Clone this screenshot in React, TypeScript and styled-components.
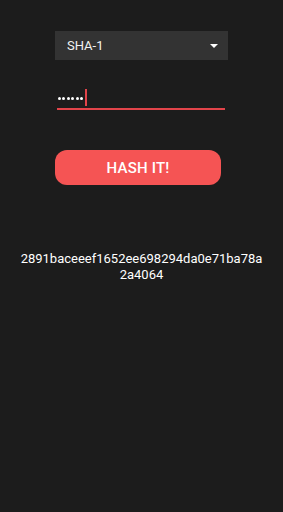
import React from "react";
import styled, {createGlobalStyle} from "styled-components";

const GlobalStyle = createGlobalStyle`
  html, body {
    margin: 0;
    padding: 0;
    background: #1c1c1c;
    font-family: Roboto, "Liberation Sans", sans-serif;
  }
`;

const Page = styled.div`
  width: 283px;
  min-height: 512px;
  background: #1c1c1c;
  display: flex;
  flex-direction: column;
  align-items: center;
  padding-top: 31px;
  box-sizing: border-box;
`;

const Select = styled.div`
  width: 173px;
  height: 29px;
  background: #333333;
  color: #f2f2f2;
  font-size: 13px;
  display: flex;
  align-items: center;
  justify-content: space-between;
  padding: 0 10px 0 12px;
  box-sizing: border-box;
`;

const Arrow = styled.span`
  width: 0;
  height: 0;
  border-left: 4px solid transparent;
  border-right: 4px solid transparent;
  border-top: 4px solid #ffffff;
`;

const Field = styled.div`
  width: 167px;
  height: 21px;
  margin-top: 27px;
  margin-right: 1px;
  border-bottom: 2px solid #e2444a;
  display: flex;
  align-items: center;
  padding-left: 1px;
  box-sizing: content-box;
`;

const Dots = styled.span`
  display: flex;
  gap: 1.4px;
  margin-top: 2px;
`;

const Dot = styled.span`
  width: 3px;
  height: 3px;
  border-radius: 50%;
  background: #ffffff;
`;

const Caret = styled.span`
  width: 2px;
  height: 17px;
  margin-left: 2px;
  background: #e2444a;
`;

const Button = styled.button`
  width: 166px;
  height: 35px;
  margin-top: 40px;
  margin-right: 7px;
  border: none;
  border-radius: 12px;
  background: #f55454;
  color: #ffffff;
  font-family: Roboto, "Liberation Sans", sans-serif;
  font-size: 15px;
  font-weight: 500;
  letter-spacing: 0.2px;
  cursor: pointer;
`;

const Result = styled.div`
  margin-top: 66px;
  width: 246px;
  color: #ffffff;
  font-size: 13px;
  line-height: 16px;
  text-align: center;
  word-break: break-all;
`;

export default function App() {
    return (
        <Page>
            <GlobalStyle/>
            <Select>
                SHA-1
                <Arrow/>
            </Select>
            <Field>
                <Dots>
                    {[0, 1, 2, 3, 4, 5].map(i => <Dot key={i}/>)}
                </Dots>
                <Caret/>
            </Field>
            <Button>HASH IT!</Button>
            <Result>2891baceeef1652ee698294da0e71ba78a2a4064</Result>
        </Page>
    );
}
